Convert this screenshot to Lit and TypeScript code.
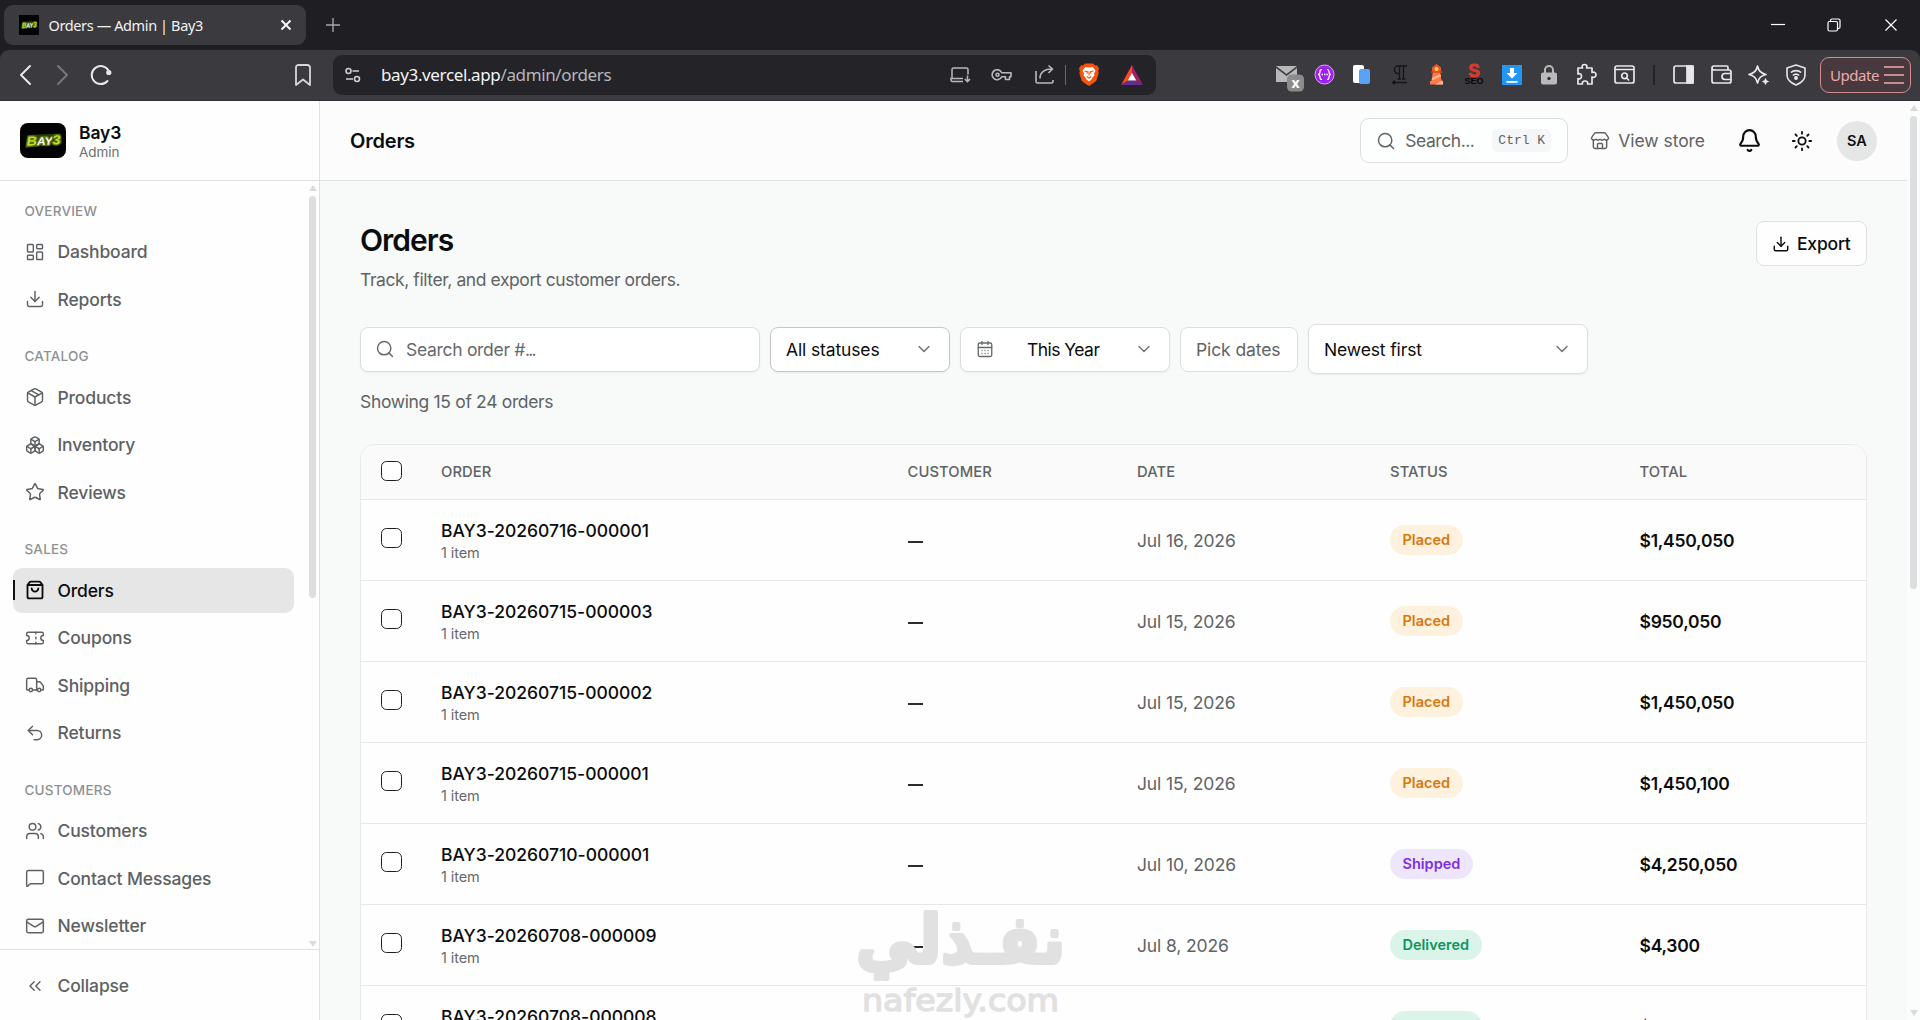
import { LitElement, html, css, svg, nothing } from "lit";
import { customElement, property } from "lit/decorators.js";

/* 24-unit stroke icons */
const ICONS: Record<string, unknown> = {
  dashboard: svg`<rect width="7" height="9" x="3" y="3" rx="1"/><rect width="7" height="5" x="14" y="3" rx="1"/><rect width="7" height="9" x="14" y="12" rx="1"/><rect width="7" height="5" x="3" y="16" rx="1"/>`,
  download: svg`<path d="M12 15V3"/><path d="M21 15v4a2 2 0 0 1-2 2H5a2 2 0 0 1-2-2v-4"/><path d="m7 10 5 5 5-5"/>`,
  package: svg`<path d="M11 21.73a2 2 0 0 0 2 0l7-4A2 2 0 0 0 21 16V8a2 2 0 0 0-1-1.73l-7-4a2 2 0 0 0-2 0l-7 4A2 2 0 0 0 3 8v8a2 2 0 0 0 1 1.73z"/><path d="M12 22V12"/><path d="M3.29 7 12 12l8.71-5"/><path d="m7.5 4.27 9 5.15"/>`,
  boxes: svg`<path d="M2.97 12.92A2 2 0 0 0 2 14.63v3.24a2 2 0 0 0 .97 1.71l3 1.8a2 2 0 0 0 2.06 0L12 19v-5.5l-5-3-4.03 2.42Z"/><path d="m7 16.5-4.74-2.85"/><path d="m7 16.5 5-3"/><path d="M7 16.5v5.17"/><path d="M12 13.5V19l3.97 2.38a2 2 0 0 0 2.06 0l3-1.8a2 2 0 0 0 .97-1.71v-3.24a2 2 0 0 0-.97-1.71L17 10.5l-5 3Z"/><path d="m17 16.5-5-3"/><path d="m17 16.5 4.74-2.85"/><path d="M17 16.5v5.17"/><path d="M7.97 4.42A2 2 0 0 0 7 6.13v4.37l5 3 5-3V6.13a2 2 0 0 0-.97-1.71l-3-1.8a2 2 0 0 0-2.06 0l-3 1.8Z"/><path d="M12 8 7.26 5.15"/><path d="m12 8 4.74-2.85"/><path d="M12 13.5V8"/>`,
  star: svg`<path d="M11.525 2.295a.53.53 0 0 1 .95 0l2.31 4.679a2.123 2.123 0 0 0 1.595 1.16l5.166.756a.53.53 0 0 1 .294.904l-3.736 3.638a2.123 2.123 0 0 0-.611 1.878l.882 5.14a.53.53 0 0 1-.771.56l-4.618-2.428a2.122 2.122 0 0 0-1.973 0L6.396 21.01a.53.53 0 0 1-.77-.56l.881-5.139a2.122 2.122 0 0 0-.611-1.879L2.16 9.795a.53.53 0 0 1 .294-.906l5.165-.755a2.122 2.122 0 0 0 1.597-1.16z"/>`,
  bag: svg`<path d="M16 10a4 4 0 0 1-8 0"/><path d="M3.103 6.034h17.794"/><path d="M3.4 5.467a2 2 0 0 0-.4 1.2V20a2 2 0 0 0 2 2h14a2 2 0 0 0 2-2V6.667a2 2 0 0 0-.4-1.2l-2-2.667A2 2 0 0 0 17 2H7a2 2 0 0 0-1.6.8z"/>`,
  ticket: svg`<path d="M2 9a3 3 0 0 1 0 6v2a2 2 0 0 0 2 2h16a2 2 0 0 0 2-2v-2a3 3 0 0 1 0-6V7a2 2 0 0 0-2-2H4a2 2 0 0 0-2 2Z"/><path d="M13 5v2"/><path d="M13 17v2"/><path d="M13 11v2"/>`,
  truck: svg`<path d="M14 18V6a2 2 0 0 0-2-2H4a2 2 0 0 0-2 2v11a1 1 0 0 0 1 1h2"/><path d="M15 18H9"/><path d="M19 18h2a1 1 0 0 0 1-1v-3.65a1 1 0 0 0-.22-.624l-3.48-4.35A1 1 0 0 0 17.52 8H14"/><circle cx="17" cy="18" r="2"/><circle cx="7" cy="18" r="2"/>`,
  undo: svg`<path d="M9 14 4 9l5-5"/><path d="M4 9h10.5a5.5 5.5 0 0 1 5.5 5.5a5.5 5.5 0 0 1-5.5 5.5H11"/>`,
  users: svg`<path d="M16 21v-2a4 4 0 0 0-4-4H6a4 4 0 0 0-4 4v2"/><path d="M16 3.128a4 4 0 0 1 0 7.744"/><path d="M22 21v-2a4 4 0 0 0-3-3.87"/><circle cx="9" cy="7" r="4"/>`,
  message: svg`<path d="M22 17a2 2 0 0 1-2 2H6.828a2 2 0 0 0-1.414.586l-2.202 2.202A.71.71 0 0 1 2 21.286V5a2 2 0 0 1 2-2h16a2 2 0 0 1 2 2z"/>`,
  mail: svg`<path d="m22 7-8.991 5.727a2 2 0 0 1-2.009 0L2 7"/><rect x="2" y="4" width="20" height="16" rx="2"/>`,
  collapse: svg`<path d="m11 17-5-5 5-5"/><path d="m18 17-5-5 5-5"/>`,
  search: svg`<path d="m21 21-4.34-4.34"/><circle cx="11" cy="11" r="8"/>`,
  store: svg`<path d="M15 21v-5a1 1 0 0 0-1-1h-4a1 1 0 0 0-1 1v5"/><path d="M17.774 10.31a1.12 1.12 0 0 0-1.549 0 2.5 2.5 0 0 1-3.451 0 1.12 1.12 0 0 0-1.548 0 2.5 2.5 0 0 1-3.452 0 1.12 1.12 0 0 0-1.549 0 2.5 2.5 0 0 1-3.77-3.248l2.889-4.184A2 2 0 0 1 7 2h10a2 2 0 0 1 1.653.873l2.895 4.192a2.5 2.5 0 0 1-3.774 3.244"/><path d="M4 10.95V19a2 2 0 0 0 2 2h12a2 2 0 0 0 2-2v-8.05"/>`,
  bell: svg`<path d="M10.268 21a2 2 0 0 0 3.464 0"/><path d="M3.262 15.326A1 1 0 0 0 4 17h16a1 1 0 0 0 .74-1.673C19.41 13.956 18 12.499 18 8A6 6 0 0 0 6 8c0 4.499-1.411 5.956-2.738 7.326"/>`,
  sun: svg`<circle cx="12" cy="12" r="4"/><path d="M12 2v2"/><path d="M12 20v2"/><path d="m4.93 4.93 1.41 1.41"/><path d="m17.66 17.66 1.41 1.41"/><path d="M2 12h2"/><path d="M20 12h2"/><path d="m6.34 17.66-1.41 1.41"/><path d="m19.07 4.93-1.41 1.41"/>`,
  chevron: svg`<path d="m6 9 6 6 6-6"/>`,
  calendar: svg`<path d="M8 2v4"/><path d="M16 2v4"/><rect width="18" height="18" x="3" y="4" rx="2"/><path d="M3 10h18"/><path d="M8 14h.01"/><path d="M12 14h.01"/><path d="M16 14h.01"/><path d="M8 18h.01"/><path d="M12 18h.01"/><path d="M16 18h.01"/>`,
};

@customElement("ui-icon")
class UiIcon extends LitElement {
  @property() name = "";
  @property({ type: Number }) size = 20;
  @property({ type: Number }) weight = 1.75;
  static styles = css`
    :host { display: inline-flex; flex: none; }
    .glyph { display: block; fill: none; stroke: currentColor; stroke-linecap: round; stroke-linejoin: round; }
  `;
  render() {
    return html`<svg class="glyph" width=${this.size} height=${this.size} viewBox="0 0 24 24" stroke-width=${this.weight}>${ICONS[this.name] ?? nothing}</svg>`;
  }
}

@customElement("brand-mark")
class BrandMark extends LitElement {
  static styles = css`
    :host { display: block; }
    .mark { display: block; width: 100%; height: 100%; }
    .word { font: italic 900 13px "Liberation Sans", sans-serif; paint-order: stroke; stroke: #55700c; stroke-width: 2.4px; fill: #c5dc2c; }
    .pale { fill: #f2f2ea; font-size: 11px; }
  `;
  render() {
    return html`<svg class="mark" viewBox="0 0 46 35" preserveAspectRatio="none"><rect width="46" height="35" fill="#020302"/>
      <path d="M5.500 25 8.500 12 40.500 10.500 42 20 32 21.500Z" fill="#2e3f06"/>
      <text class="word" x="6.500" y="22" textLength="34" lengthAdjust="spacingAndGlyphs" transform="rotate(-3 23 18)">B<tspan class="pale">AY</tspan>3</text></svg>`;
  }
}

@customElement("scroll-rail")
class ScrollRail extends LitElement {
  static styles = css`
    :host { display: flex; flex-direction: column; align-items: center; box-sizing: border-box; }
    .tri { width: 0; height: 0; border: 4px solid transparent; flex: none; }
    .up { border-top: 0; border-bottom: 6px solid #d9dbdc; margin-bottom: 5px; }
    .down { border-bottom: 0; border-top: 6px solid #d9dbdc; margin-top: auto; }
    .thumb { width: 7px; border-radius: 4px; background: #dcdedf; }
  `;
  @property({ type: Number }) thumb = 100;
  render() {
    return html`<div class="tri up"></div><div class="thumb" style="height:${this.thumb}px"></div><div class="tri down"></div>`;
  }
}

@customElement("browser-chrome")
class BrowserChrome extends LitElement {
  static styles = css`
    :host { display: block; height: 101px; background: #1f1e23; font-family: "Noto Sans", "Open Sans", sans-serif; color: #f3f3f4; }
    svg { display: block; flex: none; overflow: visible; }
    .strip { display: flex; height: 50px; align-items: center; }
    .tab { box-sizing: border-box; display: flex; align-items: center; width: 302px; height: 40px; margin-left: 4px; padding: 0 13px 0 15px; border-radius: 9px; background: #3b3a3f; }
    .fav { width: 20px; height: 20px; }
    .title { margin-left: 9.5px; font-size: 14.5px; letter-spacing: -0.38px; white-space: nowrap; flex: 1; }
    .plus { margin-left: 20px; }
    .win { display: flex; margin-left: auto; gap: 42.5px; padding-right: 22.5px; align-items: center; }
    .bar { display: flex; align-items: center; height: 51px; box-sizing: border-box; padding-bottom: 1px; background: #3b3a3f; border-radius: 9px 9px 0 0; border-bottom: 1px solid #2f2e33; }
    .nav { display: flex; align-items: center; padding-left: 19px; gap: 23px; width: 314px; box-sizing: border-box; }
    .reload { margin-left: -3.5px; }
    .mark { margin-left: auto; margin-right: 3px; }
    .url { display: flex; align-items: center; box-sizing: border-box; width: 823px; height: 40px; margin-left: 19px; padding: 0 13px 0 12px; border-radius: 9px; background: #242328; }
    .addr { margin-left: 20px; font-size: 17px; letter-spacing: -0.37px; flex: 1; white-space: nowrap; }
    .path { color: #b7b7bb; }
    .inner { display: flex; align-items: center; }
    .g1 { margin-left: 22px; } .g2 { margin-left: 23px; } .g3 { margin-left: 11px; } .g4 { margin-left: 13px; } .g5 { margin-left: 22px; }
    .divider { width: 1.500px; height: 20px; background: #6a696f; }
    .ext { display: flex; align-items: center; margin-left: 112px; }
    .slot { width: 37.5px; display: flex; justify-content: center; }
    .sep { width: 2px; height: 20px; background: #242328; margin: 0 10.5px 0 9.5px; }
    .update { box-sizing: border-box; display: flex; align-items: center; justify-content: space-between; margin-left: 5px; width: 91px; height: 36px; padding: 0 6px 0 9px; border: 1.500px solid #d28d93; border-radius: 9px; background: #47393e; color: #efa9ae; font-size: 15px; letter-spacing: -0.45px; }
  `;
  render() {
    const ln = "#e8e8ea";
    const dim = "#b9b9bd";
    return html`
      <div class="strip">
        <div class="tab">
          <brand-mark class="fav"></brand-mark>
          <span class="title">Orders — Admin | Bay3</span>
          <svg width="14" height="14" viewBox="0 0 14 14" stroke="#f5f5f5" stroke-width="2"><path d="M2.500 2.500l9 9M11.500 2.500l-9 9"/></svg>
        </div>
        <svg class="plus" width="14" height="14" viewBox="0 0 14 14" stroke="#a6a5aa" stroke-width="1.400"><path d="M7 0v14M0 7h14"/></svg>
        <div class="win">
          <svg width="14" height="14" viewBox="0 0 14 14" stroke="#fff" stroke-width="1.200"><path d="M0 6.500h14"/></svg>
          <svg width="14" height="14" viewBox="0 0 14 14" fill="none" stroke="#fff" stroke-width="1.200"><rect x="1" y="3.500" width="9.500" height="9.500" rx="1.500"/><path d="M3.500 3.500V2.500a1.500 1.500 0 0 1 1.500-1.500h6.500a1.500 1.500 0 0 1 1.500 1.500V9a1.500 1.500 0 0 1-1.500 1.500h-1"/></svg>
          <svg width="14" height="14" viewBox="0 0 14 14" stroke="#fff" stroke-width="1.200"><path d="M1.500 1.500l11 11M12.500 1.500l-11 11"/></svg>
        </div>
      </div>
      <div class="bar">
        <div class="nav">
          <svg width="14" height="22" viewBox="0 0 14 22" fill="none" stroke="${ln}" stroke-width="2" stroke-linecap="round" stroke-linejoin="round"><path d="M11 2 2 11l9 9"/></svg>
          <svg width="14" height="22" viewBox="0 0 14 22" fill="none" stroke="#77767b" stroke-width="2" stroke-linecap="round" stroke-linejoin="round"><path d="M2 2l9 9-9 9"/></svg>
          <svg class="reload" width="22" height="22" viewBox="0 0 22 22" fill="none" stroke="${ln}" stroke-width="2" stroke-linecap="round"><path d="M17.500 17A9 9 0 1 1 18.500 6.500"/><circle cx="18.800" cy="8.500" r="2.600" fill="${ln}" stroke="none"/></svg>
          <svg class="mark" width="16" height="22" viewBox="0 0 16 22" fill="none" stroke="#d8d8da" stroke-width="1.800" stroke-linejoin="round"><path d="M1 3.500A2.500 2.500 0 0 1 3.500 1h9A2.500 2.500 0 0 1 15 3.500V21l-7-5.500L1 21Z"/></svg>
        </div>
        <div class="url">
          <svg width="16" height="16" viewBox="0 0 16 16" fill="none" stroke="#cfcfd2" stroke-width="1.600"><circle cx="3.500" cy="4" r="2.500"/><path d="M7.500 4H14M1 12h7"/><circle cx="12" cy="12" r="2.500"/></svg>
          <span class="addr">bay3.vercel.app<span class="path">/admin/orders</span></span>
          <div class="inner">
            <svg width="20" height="16" viewBox="0 0 20 16" fill="none" stroke="${dim}" stroke-width="1.500"><path d="M18 7.500V2.500A1.500 1.500 0 0 0 16.500 1h-13A1.500 1.500 0 0 0 2 2.500V11M13 11.500H1V13a1.500 1.500 0 0 0 1.500 1.500H13M17.500 8.500v6M14.800 12l2.700 2.700 2.500-2.700"/></svg>
            <svg class="g1" width="20" height="14" viewBox="0 0 20 14" fill="none" stroke="${dim}" stroke-width="1.600"><path d="M9.700 4.700H19v4h-1.500V11.500h-4V8.700H9.700A5 5 0 1 1 9.700 4.700Z" stroke-linejoin="round"/><circle cx="5.500" cy="6.700" r="1.500"/></svg>
            <svg class="g2" width="19" height="19" viewBox="0 0 19 19" fill="none" stroke="${dim}" stroke-width="1.600" stroke-linejoin="round"><path d="M1 6v10.500A1.500 1.500 0 0 0 2.500 18h14a1.500 1.500 0 0 0 1.500-1.500V15M5 13.500C5 7 9.500 4 17 4M13.500.500 17.500 4l-4 4"/></svg>
            <div class="divider g3"></div>
            <svg class="g4" width="20" height="23" viewBox="0 0 20 23"><path d="M6 .5h8l2 2 2-.200L20 5.500l-.800 2.500.500 2-2.500 8-4 3L10 23l-3.200-2-4-3L.300 10l.500-2L0 5.500l2-3.200 2 .200Z" fill="#f5530f"/><path d="M10 4.500l3.500-.500 3 3.500-1.500 3 .5 2-2 2-1 2L10 18.500 7.500 16.500l-1-2-2-2 .5-2L3.500 7.500l3-3.500Z" fill="#fff"/><path d="M5.500 8l3 .700-.500 1.800M14.500 8l-3 .700.500 1.800M10 8.500v4M7.700 13.500 10 15l2.300-1.500" stroke="#f5530f" stroke-width="1.100" fill="none"/></svg>
            <svg class="g5" width="22" height="20" viewBox="0 0 22 20"><path d="M11 0 0 20l7-4.500L11 8.500Z" fill="#ff4724"/><path d="M11 0l11 20-7-4.500L11 8.500Z" fill="#9e1f63"/><path d="M0 20h22l-7-4.500H7Z" fill="#662d91"/><path d="M11 8l-4.300 7.600h8.600Z" fill="#fff"/></svg>
          </div>
        </div>
        <div class="ext">
          <div class="slot"><svg width="22" height="20" viewBox="0 0 22 20"><path d="M0 1h21L10.500 9Z" fill="#b8b8b8"/><path d="M0 3l10.500 8L21 3v14H0Z" fill="#b8b8b8"/><rect x="11" y="9.500" width="17" height="17" rx="4.500" fill="#8b8b8b"/><text x="19.500" y="23" text-anchor="middle" font-family="Noto Sans, sans-serif" font-weight="700" font-size="14" fill="#fff">x</text></svg></div>
          <div class="slot"><svg width="21" height="21" viewBox="0 0 21 21"><circle cx="10.500" cy="10.500" r="9.500" fill="#a020f0" stroke="#d9a4fa"/><path d="M8 5.500c-2 0-2 1-2 2.300S5.500 10.500 4 10.500c1.500 0 2 1.400 2 2.700s0 2.300 2 2.300M13 5.500c2 0 2 1 2 2.300s.5 2.700 2 2.700c-1.500 0-2 1.400-2 2.700s0 2.300-2 2.300" fill="none" stroke="#fff" stroke-width="1.200"/><path d="M7.500 10.500h6.500" stroke="#fff" stroke-width="1.600" stroke-dasharray="1.500 1"/></svg></div>
          <div class="slot"><svg width="17" height="19" viewBox="0 0 17 19"><rect width="11" height="18" rx="2" fill="#fff"/><rect x="6" y="4" width="11" height="15" rx="2" fill="#5aa2f5"/></svg></div>
          <div class="slot"><svg width="17" height="20" viewBox="0 0 17 20" fill="none" stroke="#151518" stroke-width="1.300"><path d="M16 1H6a4 4 0 0 0 0 7.500h2.500M8.500 1v13M12.500 1v13M6.500 14H10M11 14h3.500M2 17.500h14M4 15.500l-2.500 2L4 19.500"/></svg></div>
          <div class="slot"><svg width="17" height="21" viewBox="0 0 17 21"><path d="M8.500 0 13 3.500V7H4V3.500Z" fill="#f0562f"/><path d="M5 7h7l1.500 10H15v3.500H2V17h1.500Z" fill="#ff7a45"/><path d="M12.300 10 4 14l-.300 2.500L13 12.500ZM13.800 16.500 7 20.500h8V17Z" fill="#ffb08c"/><circle cx="8.500" cy="5" r="2" fill="#ffd13b"/><path d="M3 8h11" stroke="#d9432a" stroke-width="1.500"/></svg></div>
          <div class="slot"><svg width="20" height="21" viewBox="0 0 20 21"><text x="10" y="12.500" text-anchor="middle" font-family="Liberation Sans, sans-serif" font-weight="700" font-size="17.500" fill="#d93a2b" stroke="#d93a2b" stroke-width=".8">S</text><text x="10" y="20" text-anchor="middle" font-family="Liberation Sans, sans-serif" font-weight="700" font-size="9" fill="#0c0606">SEO</text></svg></div>
          <div class="slot"><svg width="20" height="20" viewBox="0 0 20 20"><rect width="20" height="20" fill="#2196f3"/><path d="M8 3h4v5h3.500L10 13.500 4.500 8H8ZM4.500 16h11v1.700h-11Z" fill="#fff"/></svg></div>
          <div class="slot"><svg width="16" height="20" viewBox="0 0 16 20"><path d="M4 8V5a4 4 0 0 1 8 0v3" fill="none" stroke="#bababa" stroke-width="2"/><rect y="7.500" width="16" height="12" rx="2" fill="#bababa"/><circle cx="8" cy="13.500" r="1.700" fill="#333"/></svg></div>
          <div class="slot"><svg width="21" height="21" viewBox="0 0 21 21" fill="none" stroke="${ln}" stroke-width="1.700" stroke-linejoin="round"><path d="M2 4h4.500c-1-2 0-3.500 2-3.500s3 1.500 2 3.500H16v4.500c2-1 4 0 4 2.200s-2 3.200-4 2.200V20h-4.500c.800-1.800-.500-3-2.500-3s-3.300 1.200-2.500 3H2v-5.500c2 .800 3.500-.200 3.500-2.300S4 9.200 2 10Z"/></svg></div>
          <div class="slot"><svg width="21" height="19" viewBox="0 0 21 19" fill="none" stroke="${ln}" stroke-width="1.700"><rect x="1" y="1" width="19" height="17" rx="2"/><path d="M1 4.500h19M12.500 13l2.500 2.500"/><circle cx="10.500" cy="10.800" r="2.800"/></svg></div>
          <div class="sep"></div>
          <div class="slot"><svg width="21" height="19" viewBox="0 0 21 19" fill="none" stroke="${ln}" stroke-width="1.700"><rect x="1" y="1" width="19" height="17" rx="2"/><path d="M14 1h6v17h-6Z" fill="${ln}"/></svg></div>
          <div class="slot"><svg width="21" height="19" viewBox="0 0 21 19" fill="none" stroke="${ln}" stroke-width="1.700" stroke-linejoin="round"><path d="M17 5V2.500A1.500 1.500 0 0 0 15.500 1H3a2 2 0 0 0 0 4h15a2 2 0 0 1 2 2v9a2 2 0 0 1-2 2H3a2 2 0 0 1-2-2V3M20 8.500h-6a3 3 0 0 0 0 6h6"/></svg></div>
          <div class="slot"><svg width="21" height="20" viewBox="0 0 21 20" fill="none" stroke="${ln}" stroke-width="1.700" stroke-linejoin="round"><path d="M9.500 1c1 5 3.500 7.500 8.500 8.500-5 1-7.500 3.500-8.500 8.500C8.500 13 6 10.500 1 9.500 6 8.500 8.500 6 9.500 1Z"/><path d="M17.500 13.500l.900 2.100 2.100.900-2.100.900-.900 2.100-.900-2.100-2.100-.900 2.100-.900Z" fill="${ln}" stroke-width=".8"/></svg></div>
          <div class="slot"><svg width="20" height="22" viewBox="0 0 20 22" fill="none" stroke="${ln}" stroke-width="1.600" stroke-linejoin="round"><path d="M10 1l9 3v7c0 4.500-4 8-9 10-5-2-9-5.500-9-10V4Z"/><path d="M4.800 8.500a8 8 0 0 1 10.400 0M6.800 11.500a5 5 0 0 1 6.400 0"/><circle cx="10" cy="14" r="1.200" fill="${ln}"/></svg></div>
          <div class="update"><span>Update</span><svg width="20" height="18" viewBox="0 0 20 18" stroke="#efa9ae" stroke-width="1.600"><path d="M0 1h20M0 9h20M0 17h20"/></svg></div>
        </div>
      </div>`;
  }
}

const NAV: { label: string; items: [string, string][] }[] = [
  { label: "OVERVIEW", items: [["dashboard", "Dashboard"], ["download", "Reports"]] },
  { label: "CATALOG", items: [["package", "Products"], ["boxes", "Inventory"], ["star", "Reviews"]] },
  { label: "SALES", items: [["bag", "Orders"], ["ticket", "Coupons"], ["truck", "Shipping"], ["undo", "Returns"]] },
  { label: "CUSTOMERS", items: [["users", "Customers"], ["message", "Contact Messages"], ["mail", "Newsletter"]] },
];

@customElement("side-nav")
class SideNav extends LitElement {
  static styles = css`
    :host { display: flex; flex-direction: column; box-sizing: border-box; width: 320px; flex: none; border-right: 1px solid #dfe1e1; background: #fefefe; }
    .brand { display: flex; align-items: center; box-sizing: border-box; height: 80px; padding: 0 0 0 20px; border-bottom: 1px solid #dfe1e1; flex: none; }
    .logo { width: 46px; height: 35px; border-radius: 8px; overflow: hidden; }
    .names { margin-left: 13px; display: flex; flex-direction: column; padding-top: 3px; }
    .name { font-size: 17.5px; font-weight: 600; line-height: 20px; letter-spacing: -0.1px; color: #0b0c0d; }
    .role { font-size: 13.5px; line-height: 18px; color: #6b6e70; letter-spacing: -0.05px; }
    .body { display: flex; flex: 1; min-height: 0; }
    .list { flex: 1; overflow: hidden; padding: 0 13px 0 13px; }
    .label { height: 53px; box-sizing: border-box; padding: 25.5px 0 0 11.5px; font-size: 13.5px; line-height: 18px; font-weight: 550; letter-spacing: 0.2px; color: #8e9192; }
    .label.first { height: 48px; padding-top: 20.5px; }
    .item { position: relative; display: flex; align-items: center; height: 45px; padding-left: 11.5px; gap: 13px; border-radius: 9px; color: #5d6163; font-size: 17.5px; font-weight: 450; margin-bottom: 2.5px; letter-spacing: -0.15px; }
    .item.last { margin-bottom: 0; }
    .item.on { background: #e6e6e6; color: #0c0d0e; }
    .item.on::before { content: ""; position: absolute; left: 0; top: 12px; width: 2px; height: 20px; background: #111; }
    .rail { width: 11px; padding: 4px 0 2px; margin-right: 1px; }
    .foot { box-sizing: border-box; height: 71px; border-top: 1px solid #dfe1e1; padding: 13px 13px 0; flex: none; }
  `;
  render() {
    return html`
      <div class="brand"><brand-mark class="logo"></brand-mark><div class="names"><span class="name">Bay3</span><span class="role">Admin</span></div></div>
      <div class="body">
        <div class="list">
          ${NAV.map((g, gi) => html`
            <div class="label ${gi === 0 ? "first" : ""}">${g.label}</div>
            ${g.items.map(([icon, text], i) => html`<div class="item ${text === "Orders" ? "on" : ""} ${i === g.items.length - 1 ? "last" : ""}"><ui-icon name=${icon} weight=${text === "Orders" ? 2.2 : 1.75}></ui-icon><span>${text}</span></div>`)}
          `)}
        </div>
        <scroll-rail class="rail" .thumb=${402}></scroll-rail>
      </div>
      <div class="foot"><div class="item"><ui-icon name="collapse"></ui-icon><span>Collapse</span></div></div>`;
  }
}

interface Order { id: string; date: string; status: string; total: string; }
const ORDERS: Order[] = [
  { id: "BAY3-20260716-000001", date: "Jul 16, 2026", status: "Placed", total: "$1,450,050" },
  { id: "BAY3-20260715-000003", date: "Jul 15, 2026", status: "Placed", total: "$950,050" },
  { id: "BAY3-20260715-000002", date: "Jul 15, 2026", status: "Placed", total: "$1,450,050" },
  { id: "BAY3-20260715-000001", date: "Jul 15, 2026", status: "Placed", total: "$1,450,100" },
  { id: "BAY3-20260710-000001", date: "Jul 10, 2026", status: "Shipped", total: "$4,250,050" },
  { id: "BAY3-20260708-000009", date: "Jul 8, 2026", status: "Delivered", total: "$4,300" },
  { id: "BAY3-20260708-000008", date: "Jul 8, 2026", status: "Delivered", total: "$4,300" },
];

@customElement("orders-table")
class OrdersTable extends LitElement {
  static styles = css`
    :host { display: block; border: 1px solid #e8eaea; border-radius: 15px 15px 0 0; overflow: hidden; background: #fefefe; }
    .row { display: grid; grid-template-columns: 80px 466.5px 229.5px 253px 249.5px 1fr; align-items: center; height: 81px; box-sizing: border-box; border-bottom: 1px solid #e6e8e8; font-size: 17.5px; }
    .head { height: 55px; padding-bottom: 1px; background: #fafafa; font-size: 14.75px; font-weight: 550; color: #5f6365; letter-spacing: 0.1px; }
    .box { width: 21px; height: 20px; box-sizing: border-box; border: 1.500px solid #1d1e1f; border-radius: 5.5px; margin-left: 20px; background: #fff; position: relative; top: -2px; }
    .head .box { top: -1px; }
    .order { display: flex; flex-direction: column; }
    .id { line-height: 24px; font-weight: 500; color: #0b0c0d; letter-spacing: -0.01px; }
    .sub { font-size: 14.5px; line-height: 20px; color: #66696b; letter-spacing: -0.1px; }
    .dash::before { content: ""; display: block; width: 15px; height: 2px; background: #2a2b2c; margin-top: 3px; }
    .date { color: #5f6365; letter-spacing: -0.12px; }
    .pill { display: inline-flex; align-items: center; box-sizing: border-box; height: 30px; padding: 0 12.75px 1px 12.5px; border-radius: 15px; font-size: 14.5px; font-weight: 600; }
    .Placed { background: #fef1dd; color: #d9780b; }
    .Shipped { background: #eee6fd; color: #7c2ee0; }
    .Delivered { background: #daf4ea; color: #0c9460; }
    .total { font-weight: 600; color: #0b0c0d; letter-spacing: -0.25px; }
    .nudge { position: relative; top: 1px; }
  `;
  render() {
    return html`
      <div class="row head"><div class="box"></div><span>ORDER</span><span>CUSTOMER</span><span>DATE</span><span>STATUS</span><span>TOTAL</span></div>
      ${ORDERS.map((o) => html`
        <div class="row">
          <div class="box"></div>
          <div class="order nudge"><span class="id">${o.id}</span><span class="sub">1 item</span></div>
          <span class="dash"></span>
          <span class="date">${o.date}</span>
          <span><span class="pill ${o.status}">${o.status}</span></span>
          <span class="total">${o.total}</span>
        </div>`)}`;
  }
}

@customElement("app-root")
class AppRoot extends LitElement {
  static styles = css`
    :host { display: block; position: relative; width: 1920px; height: 1020px; overflow: hidden; font-family: Inter, "Liberation Sans", sans-serif; color: #0b0c0d; background: #f8faf9; }
    .page { display: flex; height: 919px; }
    .main { flex: 1; min-width: 0; display: flex; flex-direction: column; overflow: hidden; }
    .rail { width: 13px; background: #fbfcfc; padding: 4px 0 4px; }
    .top { box-sizing: border-box; display: flex; align-items: center; height: 80px; flex: none; padding: 0 30px 0 30px; background: #fcfcfc; border-bottom: 1px solid #dfe2e1; color: #5f6365; font-size: 17.5px; }
    .crumb { font-size: 20px; font-weight: 600; color: #0b0c0d; flex: 1; letter-spacing: -0.2px; }
    .find { box-sizing: border-box; display: flex; align-items: center; width: 208px; height: 45px; padding: 0 16px 0 15px; border: 1px solid #dcdfde; border-radius: 9px; background: #fdfefe; }
    .find .word { margin-left: 9px; flex: 1; letter-spacing: -0.45px; }
    .kbd { width: 59px; height: 23px; border-radius: 5px; background: #f5f6f7; font: 13px/23px "Liberation Mono", monospace; text-align: center; }
    .store { display: flex; align-items: center; gap: 8px; margin: 0 32px 0 22px; letter-spacing: -0.05px; }
    .tool { color: #0b0c0d; }
    .sun { margin: 0 24px 0 29px; }
    .avatar { width: 40px; height: 40px; border-radius: 50%; background: #e5e6e6; color: #111; display: flex; align-items: center; justify-content: center; font-size: 14.5px; font-weight: 600; }
    .content { padding: 40px 40px 0; display: flex; flex-direction: column; }
    .heading { display: flex; justify-content: space-between; align-items: flex-start; }
    .h1 { font-size: 30px; line-height: 38px; font-weight: 600; letter-spacing: -1px; margin-top: 0; }
    .lead { font-size: 17.5px; line-height: 26px; color: #5f6365; margin-top: 8px; letter-spacing: -0.42px; }
    .export { box-sizing: border-box; display: flex; align-items: center; gap: 7px; width: 111px; height: 45px; padding-left: 15px; border: 1px solid #e0e2e2; border-radius: 8px; background: #fefefe; font-size: 17.5px; font-weight: 500; letter-spacing: -0.2px; }
    .filters { display: flex; align-items: center; gap: 10px; margin-top: 31px; height: 50px; font-size: 17.5px; }
    .ctl { box-sizing: border-box; display: flex; align-items: center; height: 45px; padding: 0 15px; border: 1px solid #dcdfde; border-radius: 8px; background: #fff; box-shadow: 0 1px 2px rgba(0,0,0,.06); white-space: nowrap; letter-spacing: -0.13px; }
    .chev { margin-left: auto; color: #717577; }
    .q { width: 400px; padding-left: 14px; color: #66696b; gap: 11px; letter-spacing: -0.3px; }
    .dots { letter-spacing: -1.8px; }
    .status { width: 180px; border-color: #c3c8c6; }
    .year { width: 210px; }
    .cal { color: #66696b; }
    .yr { margin-left: 33px; letter-spacing: -0.55px; }
    .pick { width: 118px; color: #5f6365; box-shadow: none; letter-spacing: -0.1px; }
    .sort { width: 280px; height: 50px; }
    .count { font-size: 17.5px; line-height: 26px; color: #5f6365; margin: 15px 0 29px; letter-spacing: -0.34px; }
    .wm { position: absolute; left: 850px; top: 900px; width: 222px; height: 120px; display: block; }
    .wm-ar { font-family: "DejaVu Sans", sans-serif; font-weight: 700; font-size: 67px; fill: #e1e1e1; stroke: #e1e1e1; stroke-width: 4px; stroke-linejoin: round; }
    .wm-en { font-family: "DejaVu Sans", Inter, sans-serif; font-size: 31px; fill: #e1e1e1; stroke: #e1e1e1; stroke-width: 1.400px; stroke-linejoin: round; }
  `;
  render() {
    return html`
      <browser-chrome></browser-chrome>
      <div class="page">
        <side-nav></side-nav>
        <div class="main">
          <div class="top">
            <span class="crumb">Orders</span>
            <div class="find"><ui-icon name="search"></ui-icon><span class="word">Search...</span><span class="kbd">Ctrl K</span></div>
            <div class="store"><ui-icon name="store"></ui-icon><span>View store</span></div>
            <ui-icon class="tool" name="bell" size="25" weight="2"></ui-icon>
            <ui-icon class="tool sun" name="sun" size="22" weight="2"></ui-icon>
            <div class="avatar">SA</div>
          </div>
          <div class="content">
            <div class="heading">
              <div><div class="h1">Orders</div><div class="lead">Track, filter, and export customer orders.</div></div>
              <div class="export"><ui-icon name="download" size="18" weight="1.9"></ui-icon><span>Export</span></div>
            </div>
            <div class="filters">
              <div class="ctl q"><ui-icon name="search"></ui-icon><span>Search order #<span class="dots">...</span></span></div>
              <div class="ctl status"><span>All statuses</span><ui-icon class="chev" name="chevron"></ui-icon></div>
              <div class="ctl year"><ui-icon class="cal" name="calendar" size="18"></ui-icon><span class="yr">This Year</span><ui-icon class="chev" name="chevron"></ui-icon></div>
              <div class="ctl pick"><span>Pick dates</span></div>
              <div class="ctl sort"><span>Newest first</span><ui-icon class="chev" name="chevron"></ui-icon></div>
            </div>
            <div class="count">Showing 15 of 24 orders</div>
            <orders-table></orders-table>
          </div>
        </div>
        <scroll-rail class="rail" .thumb=${473}></scroll-rail>
      </div>
      <svg class="wm" viewBox="0 0 222 120">
        <text class="wm-ar" x="215" y="63" direction="rtl" textLength="209" lengthAdjust="spacingAndGlyphs">نفـذلي</text>
        <text class="wm-en" x="12" y="111" textLength="197" lengthAdjust="spacingAndGlyphs">nafezly.com</text>
      </svg>`;
  }
}
